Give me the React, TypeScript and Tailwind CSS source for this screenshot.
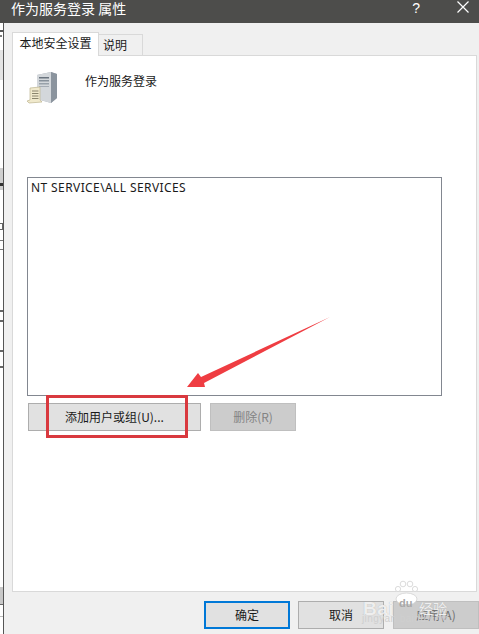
const cjk = "font-['Noto_Sans_CJK_SC','Microsoft_YaHei',sans-serif]";

function Btn({ label, className }: { label: string; className: string }) {
  return (
    <button className={`h-7 flex items-center justify-center border text-xs ${className}`}>{label}</button>
  );
}

function ServerIcon() {
  return (
    <svg width="32" height="34" viewBox="0 0 32 34" className="ml-[14px] mt-[16px] shrink-0">
      <polygon points="10,3 24,0 30,2 30,26 24,31 10,27" fill="#a5acb4" />
      <polygon points="10,3 24,0 24,31 10,27" fill="#d3d7db" />
      <polygon points="24,0 30,2 30,26 24,31" fill="#8b949e" />
      <rect x="12" y="5" width="10" height="1.5" fill="#6a747f" />
      <rect x="12" y="8" width="10" height="1.5" fill="#87919b" />
      <rect x="12" y="11" width="10" height="1.5" fill="#98a1aa" />
      <rect x="12" y="14" width="10" height="1" fill="#a5acb4" />
      <polygon points="3,16 13,15 13,28 15,30 2,31 0,29 3,28" fill="#f0e9cc" stroke="#bdb48f" strokeWidth="0.7" />
      <rect x="5" y="18.5" width="6.5" height="1" fill="#8a846c" />
      <rect x="5" y="21" width="6.5" height="1" fill="#8a846c" />
      <rect x="5" y="23.5" width="6.5" height="1" fill="#8a846c" />
      <rect x="5" y="26" width="6.5" height="1" fill="#8a846c" />
    </svg>
  );
}

function LeftStrip() {
  return (
    <div className="w-[3px] shrink-0 flex flex-col items-start bg-white">
      <div className="h-[23px] w-full bg-[#4d4d4b] shrink-0" />
      <div className="h-[7px] shrink-0" />
      <div className="h-[2px] w-[3px] bg-[#555] shrink-0" />
      <div className="h-[3px] shrink-0" />
      <div className="h-[2px] w-[2px] bg-[#777] shrink-0" />
      <div className="h-[13px] shrink-0" />
      <div className="h-[30px] w-full bg-[#e4e4e4] shrink-0" />
      <div className="h-[88px] shrink-0" />
      <div className="h-[22px] w-full bg-[#cfcfcf] shrink-0 pt-[15px]"><div className="w-[3px] h-[3px] bg-[#333]" /></div>
      <div className="h-[33px] shrink-0" />
      <div className="h-[7px] w-[3px] border-r border-y border-[#666] shrink-0" />
      <div className="h-[10px] shrink-0" />
      <div className="h-[10px] w-full border-y border-[#777] shrink-0" />
      <div className="h-[60px] shrink-0" />
      <div className="h-[12px] w-full border-y-2 border-[#666] shrink-0" />
      <div className="h-[28px] shrink-0" />
      <div className="h-[18px] w-full border-y-2 border-[#666] shrink-0" />
      <div className="h-[219px] shrink-0" />
      <div className="h-[18px] w-full bg-[#c8c8c8] border-b border-[#666] shrink-0" />
      <div className="h-[11px] shrink-0" />
      <div className="h-px w-full bg-[#bbb] shrink-0" />
    </div>
  );
}

export default function App() {
  return (
    <div className={`relative w-[479px] h-[634px] overflow-hidden flex bg-white text-[#1a1a1a] ${cjk}`}>
      <LeftStrip />
      <div className="flex-1 min-w-0 flex flex-col bg-[#f0f0f0] border-l border-[#555]">
        <div className="h-[23px] shrink-0 bg-[#4d4d4b] flex items-start pt-px text-white text-sm leading-[14px] pl-2 pr-[10px] -ml-px">
          <span className="flex-1">作为服务登录 属性</span>
          <span className="mr-[37px] text-sm leading-[14px] font-['Liberation_Sans']">?</span>
          <svg width="12" height="12" viewBox="0 0 12 12"><path d="M0.5 0.5L11.5 11.5M11.5 0.5L0.5 11.5" stroke="#fff" strokeWidth="1.2" /></svg>
        </div>
        <div className="flex-1 min-h-0 flex flex-col pl-2 pr-[2px] pt-[9px]">
          <div className="h-6 shrink-0 flex items-end relative z-10 -mb-px">
            <div className="w-[87px] h-6 pb-[3px] bg-white border border-b-0 border-[#d9d9d9] text-xs flex items-center justify-center">本地安全设置</div>
            <div className="w-[44px] h-[22px] pl-[4px] bg-[#f0f0f0] border border-l-0 border-[#d9d9d9] text-xs flex items-center justify-start">说明</div>
          </div>
          <div className="h-[537px] shrink-0 bg-white border border-[#d9d9d9] flex flex-col">
            <div className="flex h-[121px] shrink-0">
              <ServerIcon />
              <div className="ml-[26px] mt-[16px] text-xs leading-[18px]">作为服务登录</div>
            </div>
            <div className="ml-[14px] w-[415px] h-[219px] shrink-0 border border-[#828790] px-[3px] py-[1px] text-xs leading-[18px] font-['Noto_Sans'] tracking-[0.4px]">NT SERVICE\ALL SERVICES</div>
            <div className="flex ml-[15px] mt-[7px] gap-[9px]">
              <Btn label="添加用户或组(U)..." className="w-[173px] bg-[#e1e1e1] border-[#adadad]" />
              <Btn label="删除(R)" className="w-[86px] bg-[#cccccc] border-[#bfbfbf] text-[#838383]" />
            </div>
          </div>
          <div className="flex-1 flex justify-end items-start pt-[9px] gap-[8px] -mr-[2px]">
            <Btn label="确定" className="w-[86px] bg-[#e1e1e1] border-2 border-[#0078d7]" />
            <Btn label="取消" className="w-[86px] bg-[#e1e1e1] border-[#adadad] mr-[1px]" />
            <Btn label="应用(A)" className="w-[86px] bg-[#cccccc] border-[#bfbfbf] text-[#6f6f6f]" />
          </div>
        </div>
      </div>

      <svg width="479" height="634" viewBox="0 0 479 634" className="absolute inset-0 pointer-events-none">
        <polygon points="330,317 204,383 205,387 187,387 198,373 201,377" fill="#ef3d42" />
        <rect x="47.5" y="396.5" width="139" height="40" fill="none" stroke="#d9393f" strokeWidth="3" />
      </svg>

      <div className="absolute left-[362px] top-[578px] w-[117px] h-[56px] pointer-events-none text-white/80">
        <svg width="28" height="24" viewBox="0 0 28 24" className="absolute left-[30px] top-[2px]" fill="#ffffff" stroke="#d2d2d2" strokeWidth="0.8">
          <circle cx="6" cy="9" r="2.6" /><circle cx="11" cy="4" r="2.8" /><circle cx="18" cy="4" r="2.8" /><circle cx="23" cy="9" r="2.6" />
          <ellipse cx="14.5" cy="19" rx="10.5" ry="6" />
        </svg>
        <span className="absolute left-[1px] top-[21px] text-[19px] leading-none font-bold tracking-[0.5px] font-['Liberation_Sans'] [text-shadow:0_0_1px_#a8a8a8]">Bai</span>
        <span className="absolute left-[37px] top-[20px] text-[11px] leading-none font-bold text-[#a8a8a8] font-['Liberation_Sans']">du</span>
        <span className="absolute left-[57px] top-[23px] text-[14px] leading-none [text-shadow:0_0_1px_#a8a8a8]">经验</span>
        <span className="absolute left-0 top-[36px] text-[10px] leading-none text-[#cfcfcf] font-['Liberation_Sans'] tracking-[0.4px]">jingyan baidu.com</span>
      </div>
    </div>
  );
}
